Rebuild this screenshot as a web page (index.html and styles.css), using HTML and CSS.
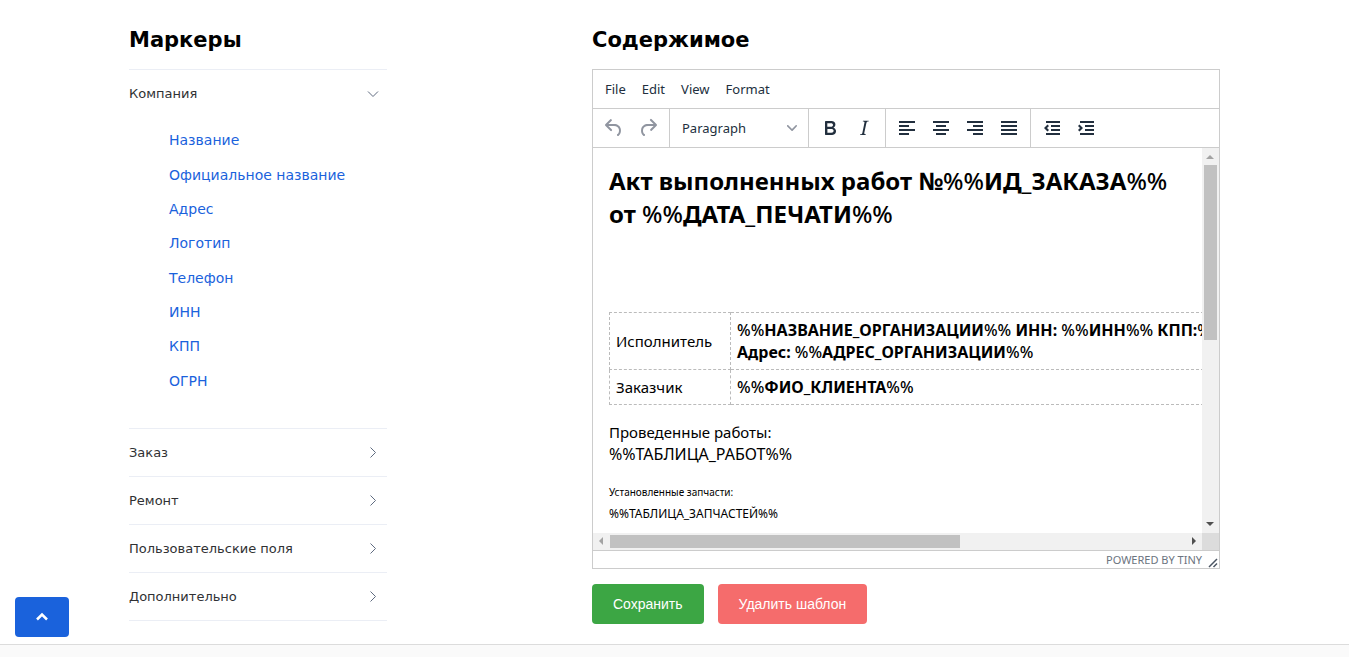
FILE: index.html
```html
<!DOCTYPE html>
<html lang="ru">
<head>
<meta charset="utf-8">
<title>Шаблон документа</title>
<link rel="stylesheet" href="styles.css">
</head>
<body>
<main class="page">
  <section class="markers">
    <h2 class="title">Маркеры</h2>
    <div class="accordion">
      <div class="panel">
        <button class="panel-head" type="button" aria-expanded="true">Компания
          <svg class="arrow" viewBox="0 0 12 12"><path d="M1 3.5 6 8.5 11 3.5"/></svg>
        </button>
        <ul class="marker-list">
          <li><a href="#">Название</a></li>
          <li><a href="#">Официальное название</a></li>
          <li><a href="#">Адрес</a></li>
          <li><a href="#">Логотип</a></li>
          <li><a href="#">Телефон</a></li>
          <li><a href="#">ИНН</a></li>
          <li><a href="#">КПП</a></li>
          <li><a href="#">ОГРН</a></li>
        </ul>
      </div>
      <div class="panel">
        <button class="panel-head" type="button" aria-expanded="false">Заказ
          <svg class="arrow" viewBox="0 0 12 12"><path d="M3.5 0.5 8.5 5.5 3.5 10.5"/></svg>
        </button>
      </div>
      <div class="panel">
        <button class="panel-head" type="button" aria-expanded="false">Ремонт
          <svg class="arrow" viewBox="0 0 12 12"><path d="M3.5 0.5 8.5 5.5 3.5 10.5"/></svg>
        </button>
      </div>
      <div class="panel">
        <button class="panel-head" type="button" aria-expanded="false">Пользовательские поля
          <svg class="arrow" viewBox="0 0 12 12"><path d="M3.5 0.5 8.5 5.5 3.5 10.5"/></svg>
        </button>
      </div>
      <div class="panel">
        <button class="panel-head" type="button" aria-expanded="false">Дополнительно
          <svg class="arrow" viewBox="0 0 12 12"><path d="M3.5 0.5 8.5 5.5 3.5 10.5"/></svg>
        </button>
      </div>
    </div>
  </section>

  <section class="content">
    <h2 class="title">Содержимое</h2>
    <div class="editor">
      <div class="menubar">
        <button type="button">File</button>
        <button type="button">Edit</button>
        <button type="button">View</button>
        <button type="button">Format</button>
      </div>
      <div class="toolbar">
        <div class="group muted">
          <button type="button" aria-label="Undo"><svg viewBox="0 0 24 24"><path d="M6.4 8H12c3.7 0 6.2 2 6.8 5.1.6 2.7-.4 5.6-2.3 6.8a1 1 0 0 1-1-1.8c1.1-.6 1.8-2.7 1.4-4.6-.5-2.1-2.1-3.5-4.9-3.5H6.4l3.3 3.3a1 1 0 1 1-1.4 1.4l-5-5a1 1 0 0 1 0-1.4l5-5a1 1 0 0 1 1.4 1.4L6.4 8z"/></svg></button>
          <button type="button" aria-label="Redo"><svg viewBox="0 0 24 24"><path d="M17.6 10H12c-2.8 0-4.4 1.4-4.9 3.5-.4 2 .3 4 1.4 4.6a1 1 0 1 1-1 1.8c-2-1.2-2.9-4.1-2.3-6.8.6-3 3-5.1 6.8-5.1h5.6l-3.3-3.3a1 1 0 1 1 1.4-1.4l5 5a1 1 0 0 1 0 1.4l-5 5a1 1 0 0 1-1.4-1.4l3.3-3.3z"/></svg></button>
        </div>
        <div class="group">
          <button class="format" type="button" aria-haspopup="listbox">Paragraph
            <svg viewBox="0 0 10 10"><path d="M8.7 2.2c.3-.3.8-.3 1 0 .4.4.4.9 0 1.2L5.7 7.8c-.3.3-.9.3-1.2 0L.2 3.4a.8.8 0 0 1 0-1.2c.3-.3.8-.3 1.1 0L5 6l3.7-3.8z"/></svg>
          </button>
        </div>
        <div class="group">
          <button type="button" aria-label="Bold"><svg viewBox="0 0 24 24"><path fill-rule="evenodd" d="M7.8 19c-.3 0-.5 0-.6-.2l-.2-.5V5.7c0-.2 0-.4.2-.5l.6-.2h5c1.5 0 2.7.3 3.5 1 .7.6 1.1 1.4 1.1 2.5a3 3 0 0 1-.6 1.9c-.4.6-1 1-1.6 1.2.4.1.9.3 1.3.6s.8.7 1 1.2c.4.4.5 1 .5 1.6 0 1.3-.4 2.3-1.3 3-.8.7-2.1 1-3.8 1H7.8zm5-8.3c.6 0 1.2-.1 1.6-.5.4-.3.6-.7.6-1.3 0-1.1-.8-1.7-2.3-1.7H9.3v3.5h3.4zm.5 6c.7 0 1.3-.1 1.7-.4.4-.4.6-.9.6-1.5s-.2-1-.7-1.4c-.4-.3-1-.4-2-.4H9.4v3.8h4z"/></svg></button>
          <button type="button" aria-label="Italic"><svg viewBox="0 0 24 24"><path d="M16.7 4.7l-.1.9h-.3c-.6 0-1 0-1.4.3-.3.3-.4.6-.5 1.1l-2.1 9.8v.6c0 .5.4.8 1.4.8h.2l-.2.8H8l.2-.8h.2c1.1 0 1.8-.5 2-1.5l2-9.8.1-.5c0-.6-.4-.8-1.4-.8h-.3l.2-.9h5.8z"/></svg></button>
        </div>
        <div class="group">
          <button type="button" aria-label="Align left"><svg viewBox="0 0 24 24"><path d="M4 5h16v2H4zM4 9h10v2H4zM4 13h16v2H4zM4 17h10v2H4z"/></svg></button>
          <button type="button" aria-label="Align center"><svg viewBox="0 0 24 24"><path d="M4 5h16v2H4zM7 9h10v2H7zM4 13h16v2H4zM7 17h10v2H7z"/></svg></button>
          <button type="button" aria-label="Align right"><svg viewBox="0 0 24 24"><path d="M4 5h16v2H4zM10 9h10v2H10zM4 13h16v2H4zM10 17h10v2H10z"/></svg></button>
          <button type="button" aria-label="Justify"><svg viewBox="0 0 24 24"><path d="M4 5h16v2H4zM4 9h16v2H4zM4 13h16v2H4zM4 17h16v2H4z"/></svg></button>
        </div>
        <div class="group">
          <button type="button" aria-label="Decrease indent"><svg viewBox="0 0 24 24"><path d="M6 5h14v2H6zM11 9h9v2h-9zM11 13h9v2h-9zM6 17h14v2H6zM7.5 8.6 9 10.1 7 12 9 13.9 7.5 15.4 4 12z"/></svg></button>
          <button type="button" aria-label="Increase indent"><svg viewBox="0 0 24 24"><path d="M6 5h14v2H6zM11 9h9v2h-9zM11 13h9v2h-9zM6 17h14v2H6zM5.5 8.6 4 10.1 6 12 4 13.9 5.5 15.4 9 12z"/></svg></button>
        </div>
      </div>
      <div class="viewport">
        <article class="document">
          <h1>Акт выполненных работ №<i>%%</i>ИД_ЗАКАЗА<i>%%</i><br>от <i>%%</i>ДАТА_ПЕЧАТИ<i>%%</i></h1>
          <table>
            <tr><td class="party">Исполнитель</td><td><b><i>%%</i>НАЗВАНИЕ_ОРГАНИЗАЦИИ<i>%%</i> ИНН: <i>%%</i>ИНН<i>%%</i> КПП:<i>%%</i><br>Адрес: <i>%%</i>АДРЕС_ОРГАНИЗАЦИИ<i>%%</i></b></td></tr>
            <tr><td class="party">Заказчик</td><td><b><i>%%</i>ФИО_КЛИЕНТА<i>%%</i></b></td></tr>
          </table>
          <p>Проведенные работы:<br><span class="marker">%%ТАБЛИЦА_РАБОТ%%</span></p>
          <p class="small"><span class="tiny">Установленные запчасти:</span><br>%%ТАБЛИЦА_ЗАПЧАСТЕЙ%%</p>
        </article>
        <div class="scroll vertical">
          <svg class="off" viewBox="0 0 17 17"><path d="M4 11h8L8 7z"/></svg>
          <div class="thumb"></div>
          <svg viewBox="0 0 17 17"><path d="M4 6h8L8 10z"/></svg>
        </div>
        <div class="scroll horizontal">
          <svg class="off" viewBox="0 0 17 17"><path d="M10 4v8L6 8z"/></svg>
          <div class="thumb"></div>
          <svg viewBox="0 0 17 17"><path d="M7 4v8l4-4z"/></svg>
        </div>
        <div class="corner"></div>
      </div>
      <div class="statusbar">
        <a href="#">POWERED BY TINY</a>
        <svg viewBox="0 0 10 10"><path d="M1 9 9 1M5.5 9 9 5.5"/></svg>
      </div>
    </div>
    <div class="actions">
      <button class="save" type="button">Сохранить</button>
      <button class="delete" type="button">Удалить шаблон</button>
    </div>
  </section>
</main>
<footer class="footer"></footer>
<button class="to-top" type="button" aria-label="Наверх"><svg viewBox="0 0 14 10"><path d="M2 7.5 7 2.5 12 7.5"/></svg></button>
</body>
</html>
```
FILE: styles.css
```css
* { box-sizing: border-box; }

body {
  margin: 0;
  min-height: 100vh;
  display: flex;
  flex-direction: column;
  background: #fff;
  color: #000;
  font-family: Verdana, "DejaVu Sans", sans-serif;
  overflow: hidden;
}

button {
  margin: 0;
  padding: 0;
  border: 0;
  background: none;
  font: inherit;
  color: inherit;
  cursor: pointer;
}

.page {
  width: 100%;
  max-width: 1351px;
  margin: 0 auto;
  padding: 25px 129px 20px;
  display: grid;
  grid-template-columns: 258fr 628fr;
  gap: 205px;
}

.title {
  margin: 0 0 14px;
  font-size: 21px;
  line-height: 30px;
  font-weight: bold;
}

.accordion { border-top: 1px solid #ebeef5; }

.panel { border-bottom: 1px solid #ebeef5; }

.panel-head {
  width: 100%;
  height: 47px;
  padding-right: 8px;
  display: flex;
  align-items: center;
  justify-content: space-between;
  font-size: 13px;
  color: #303133;
}

.arrow {
  width: 12px;
  height: 12px;
  fill: none;
  stroke: #5f6b80;
}

.marker-list {
  height: 311px;
  margin: 0;
  padding: 6px 0 30px 40px;
  display: grid;
  grid-auto-rows: 1fr;
  align-items: center;
  list-style: none;
  font-size: 14px;
}

.marker-list a { color: #1a62dc; text-decoration: none; }

.content { min-width: 0; }

.editor {
  border: 1px solid #ccc;
  font-family: "Segoe UI", "Noto Sans", sans-serif;
}

.menubar {
  height: 39px;
  padding: 0 4px;
  display: flex;
  border-bottom: 1px solid #ccc;
  font-size: 13px;
  color: #222f3e;
}

.menubar button { padding: 0 8px; }

.toolbar {
  height: 39px;
  display: flex;
  border-bottom: 1px solid #ccc;
  color: #222f3e;
}

.group {
  padding: 0 4px;
  display: flex;
  border-right: 1px solid #ccc;
}

.group:last-child { border-right: 0; }

.group button {
  width: 34px;
  display: flex;
  align-items: center;
  justify-content: center;
}

.group svg { width: 24px; height: 24px; fill: #222f3e; }

.muted svg { fill: #9095a0; }

.group .format {
  width: 130px;
  padding: 0 7px 0 8px;
  justify-content: space-between;
  font-size: 13px;
}

.group .format svg { width: 10px; height: 10px; fill: #9095a0; }

.viewport {
  height: 402px;
  display: grid;
  grid-template-columns: minmax(0, 1fr) 17px;
  grid-template-rows: minmax(0, 1fr) 17px;
}

.document {
  padding: 16px 16px 0;
  overflow: hidden;
  font-size: 15px;
  line-height: 22px;
}

.document h1 {
  margin: 0 0 82px;
  font-size: 24px;
  line-height: 33px;
  white-space: nowrap;
}

.document i { font-style: normal; font-weight: 500; }

.document b,
.document .marker { font-size: 16px; }

.document table {
  width: 760px;
  border-collapse: collapse;
}

.document td {
  padding: 6px;
  border: 1px dashed #bbb;
}

.document .party { width: 121px; }

.document p { margin: 16px 0; }

.document .small { font-size: 12px; }

.document .tiny { font-size: 10px; }

.scroll { display: flex; background: #f1f1f1; }

.scroll svg { width: 17px; height: 17px; flex: none; fill: #505050; }

.scroll .off { fill: #a3a3a3; }

.scroll .thumb { background: #c1c1c1; }

.vertical { flex-direction: column; }

.vertical .thumb { width: 13px; height: 175px; margin: 0 2px auto; }

.horizontal .thumb { width: 350px; height: 13px; margin: 2px auto 2px 0; }

.corner { background: #dcdcdc; }

.statusbar {
  height: 18px;
  padding-right: 1px;
  display: flex;
  align-items: center;
  justify-content: flex-end;
  gap: 6px;
  border-top: 1px solid #ccc;
  font-size: 11px;
  line-height: 17px;
}

.statusbar a { color: #6b7480; text-decoration: none; }

.statusbar svg {
  width: 10px;
  height: 10px;
  align-self: flex-end;
  fill: none;
  stroke: #4b5563;
  stroke-width: 1.5;
}

.actions { margin-top: 15px; display: flex; gap: 14px; }

.actions button {
  height: 40px;
  padding: 0 21px;
  border-radius: 4px;
  font: 14px "Liberation Sans", Arial, sans-serif;
  color: #fff;
}

.actions .save { background: #3ca644; }

.actions .delete { background: #f56c6c; }

.footer {
  flex: 1;
  min-height: 13px;
  border-top: 1px solid #dcdcdc;
  background: #fafafa;
}

.to-top {
  position: fixed;
  left: 15px;
  bottom: 20px;
  width: 54px;
  height: 40px;
  display: flex;
  align-items: center;
  justify-content: center;
  border-radius: 4px;
  background: #1a62dc;
}

.to-top svg {
  width: 14px;
  height: 10px;
  fill: none;
  stroke: #fff;
  stroke-width: 2.5;
}
```
